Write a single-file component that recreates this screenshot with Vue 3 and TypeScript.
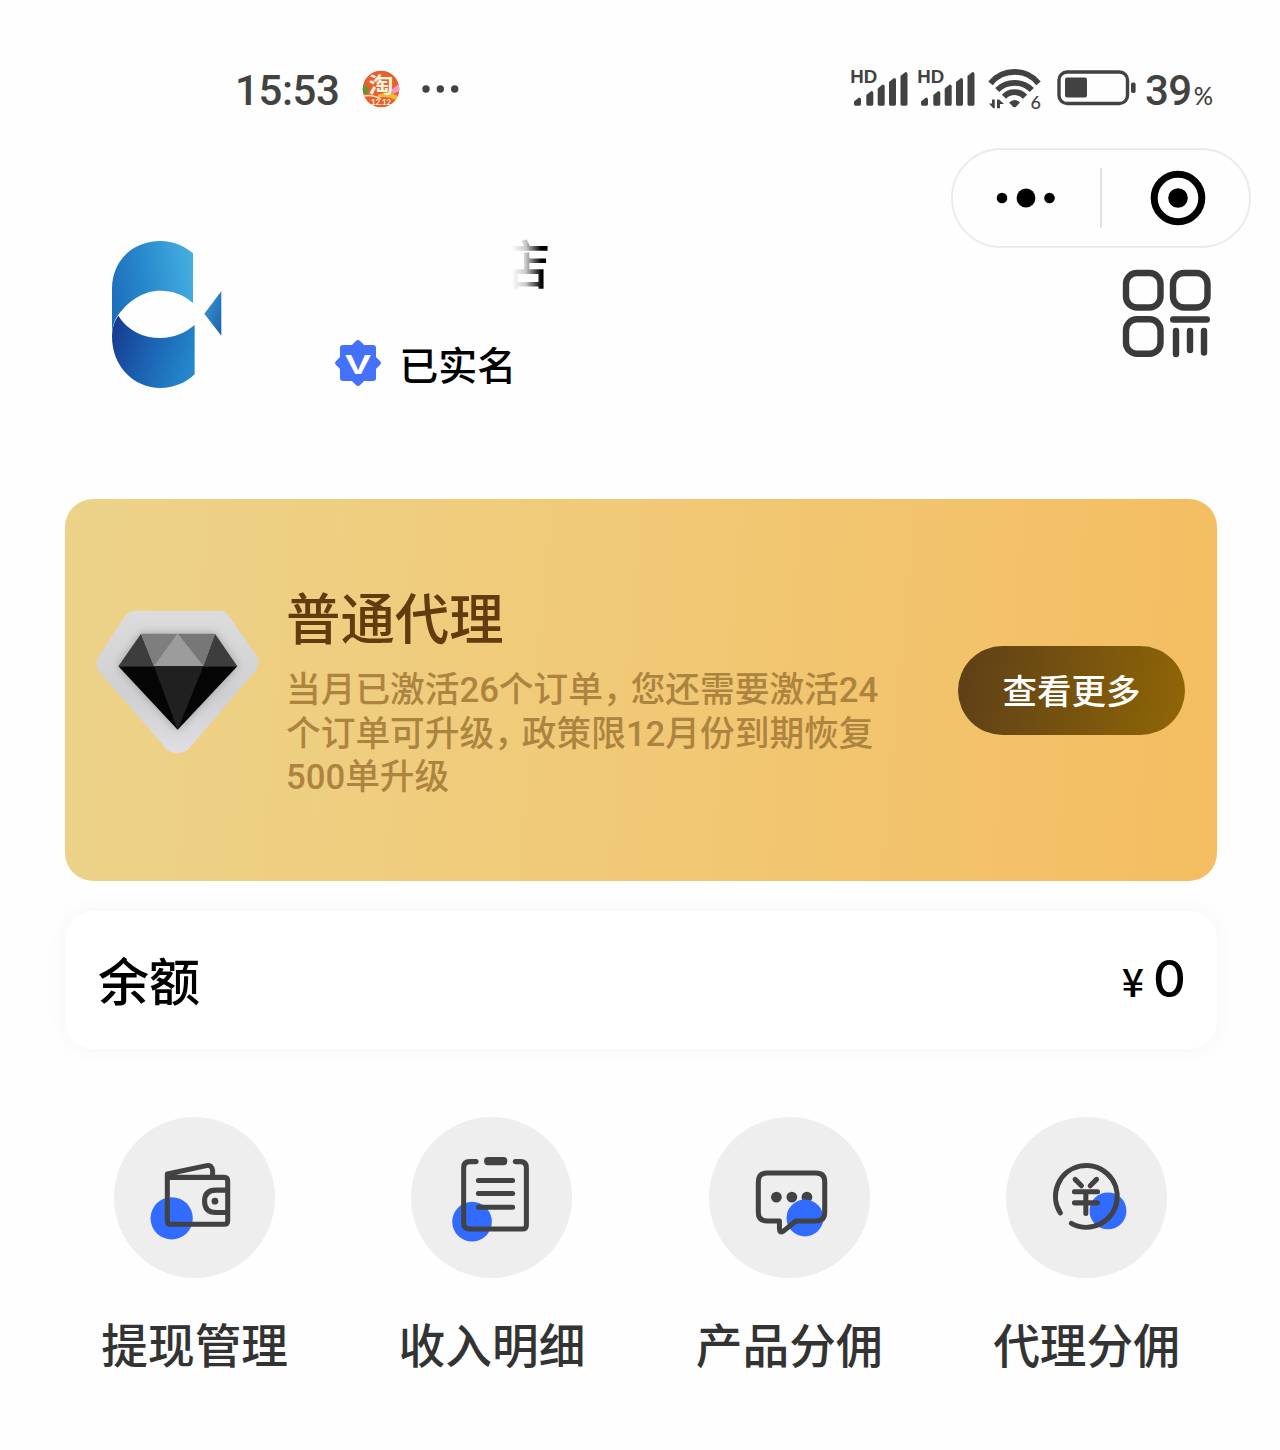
<script lang="ts" setup>
import { ref } from "vue"

interface MenuItem {
  key: string
  label: string
  viewBox: string
}

const time = ref("15:53")
const battery = ref(39)
const balance = ref(0)

// bars of one signal icon: left edge and top edge
const bars = [
  [3, 31.5],
  [15.3, 25],
  [26.7, 18.5],
  [38, 12],
  [49.5, 6],
]

const menus: MenuItem[] = [
  { key: "wallet", label: "提现管理", viewBox: "74 52 480 480" },
  { key: "detail", label: "收入明细", viewBox: "65 52 480 480" },
  { key: "product", label: "产品分佣", viewBox: "72 52 480 480" },
  { key: "agent", label: "代理分佣", viewBox: "80 52 480 480" },
]
</script>

<template>
  <div class="page">
    <div class="status">
      <span class="time">{{ time }}</span>
      <svg class="app-icon" viewBox="0 0 38 38">
        <defs>
          <clipPath id="app-clip"><circle cx="19" cy="19" r="18.3" /></clipPath>
        </defs>
        <g clip-path="url(#app-clip)">
          <rect width="38" height="38" fill="#e8602c" />
          <path d="M0 14L7 18L5 24L0 22Z" fill="#5c9a35" />
          <path d="M29 20L38 13V21L31 24Z" fill="#ef9ac4" />
          <path d="M16 25Q25 20 36 26L34 30Q24 25 15 28Z" fill="#f7b733" />
          <path d="M2 26Q10 24 19 29" stroke="#fbe3b0" stroke-width="1.5" fill="none" />
        </g>
        <text x="6.5" y="22" class="app-word" textLength="25" lengthAdjust="spacingAndGlyphs">淘</text>
        <text x="9" y="34.5" class="app-date" textLength="20" lengthAdjust="spacingAndGlyphs">12.12</text>
      </svg>
      <svg class="more" viewBox="0 0 38 8">
        <circle cx="4" cy="4" r="3.7" />
        <circle cx="18.3" cy="4" r="3.7" />
        <circle cx="32.7" cy="4" r="3.7" />
      </svg>
      <div class="status-right">
        <svg v-for="n in 2" :key="n" class="signal" viewBox="0 0 58 40">
          <text x="-0.8" y="17" class="hd" textLength="27" lengthAdjust="spacingAndGlyphs">HD</text>
          <path
            v-for="bar in bars"
            :key="bar[0]"
            :d="`M${bar[0]} ${bar[1] + 4}L${bar[0] + 5} ${bar[1]}Q${bar[0] + 7} ${bar[1]} ${bar[0] + 7} ${bar[1] + 2}V38Q${bar[0] + 7} 39.7 ${bar[0] + 5.5} 39.7H${bar[0] + 1.5}Q${bar[0]} 39.7 ${bar[0]} 38Z`"
          />
        </svg>
        <svg class="wifi" viewBox="0 0 54 44">
          <g fill="none" stroke="#424242" stroke-width="5.8">
            <path d="M2.5 15.3A31 31 0 0 1 50.5 15.3" />
            <path d="M9.2 22A24.6 24.6 0 0 1 43.8 22" />
            <path d="M16 28.7A14.5 14.5 0 0 1 37 28.7" />
          </g>
          <path d="M21 34.5Q26.5 29.5 32 34.5L28 38.7Q26.5 40 25 38.7Z" />
          <path d="M1 35.5H4V31.5H6.8V40.2H5.2ZM9 40.2V31.5H11L16 36H12V40.2Z" />
          <text x="42.5" y="41" class="wifi-num">6</text>
        </svg>
        <svg class="battery" viewBox="0 0 80 36">
          <rect x="2" y="2" width="68.5" height="31.5" rx="8" fill="none" stroke="#424242" stroke-width="3.4" />
          <rect x="8" y="7.5" width="22" height="20" rx="2" />
          <rect x="74" y="12.5" width="4.6" height="10.5" rx="1.8" />
        </svg>
        <span class="percent">{{ battery }}<small>%</small></span>
      </div>
    </div>

    <div class="header">
      <svg class="logo" viewBox="60 55 340 455">
        <defs>
          <linearGradient id="fish-top" x1="0" y1="0.6" x2="1" y2="0.4">
            <stop offset="0" stop-color="#1c6fbb" />
            <stop offset="0.4" stop-color="#2787cc" />
            <stop offset="1" stop-color="#42addf" />
          </linearGradient>
          <linearGradient id="fish-bottom" x1="0" y1="0.3" x2="1" y2="0.6">
            <stop offset="0" stop-color="#173d91" />
            <stop offset="0.45" stop-color="#1b62b2" />
            <stop offset="1" stop-color="#2588cc" />
          </linearGradient>
          <linearGradient id="fish-tail" x1="0" y1="0" x2="1" y2="1">
            <stop offset="0" stop-color="#3c9dd8" />
            <stop offset="1" stop-color="#1b5fa8" />
          </linearGradient>
        </defs>
        <path
          d="M66 205C68 118 132 64 212 64C250 64 285 80 309 101V250C280 224 246 213 212 213C158 213 115 245 85 285C73 300 68 320 66 345Z"
          fill="url(#fish-top)"
        />
        <path
          d="M85 288C112 332 160 355 212 355C250 355 285 340 314 316V464C288 490 250 505 212 505C130 505 66 440 66 350C67 325 73 303 85 288Z"
          fill="url(#fish-bottom)"
        />
        <path d="M343 282L394 215V348Z" fill="url(#fish-tail)" />
      </svg>
      <div class="user">
        <div class="name">店</div>
        <div class="verified">
          <svg class="badge" viewBox="0 0 48 48">
            <g fill="#4470fa">
              <rect x="6" y="6" width="36" height="36" rx="3" />
              <rect x="7" y="7" width="34" height="34" rx="3" transform="rotate(45 24 24)" />
            </g>
            <text x="11" y="34.5" textLength="26" lengthAdjust="spacingAndGlyphs">V</text>
          </svg>
          <span>已实名</span>
        </div>
      </div>
      <div class="tools">
        <div class="capsule">
          <svg class="capsule-more" viewBox="0 0 60 20">
            <circle cx="6" cy="10" r="5.3" />
            <circle cx="30" cy="10" r="9.4" />
            <circle cx="53.5" cy="10" r="5.3" />
          </svg>
          <i class="divider" />
          <svg class="capsule-close" viewBox="0 0 56 56">
            <circle cx="28" cy="28" r="23.8" fill="none" stroke="#000" stroke-width="7" />
            <circle cx="28" cy="28" r="9.8" />
          </svg>
        </div>
        <svg class="qr" viewBox="0 0 90 90">
          <rect x="4" y="4" width="34.5" height="34.5" rx="11" />
          <rect x="51" y="4" width="34.5" height="34.5" rx="11" />
          <rect x="4" y="50.3" width="34.5" height="34.5" rx="11" />
          <path d="M51.2 50.5H84.8M54 62V85M68 62V81M82 62V83.5" />
        </svg>
      </div>
    </div>

    <div class="level">
      <svg class="diamond" viewBox="45 88 495 436">
        <defs>
          <linearGradient id="gem-edge" x1="0" y1="0" x2="0" y2="1">
            <stop offset="0" stop-color="#dcdcdc" />
            <stop offset="0.6" stop-color="#d0d0d3" />
            <stop offset="1" stop-color="#dfdee2" />
          </linearGradient>
          <filter id="gem-soft" x="-20%" y="-20%" width="140%" height="140%">
            <feGaussianBlur stdDeviation="14" />
          </filter>
        </defs>
        <path
          d="M165 93H420Q437 94 447 109L532 232Q540 252 528 272L325 509Q315 519 300 519H285Q270 519 259 507L58 276Q44 258 53 235L135 109Q147 94 165 93Z"
          fill="url(#gem-edge)"
        />
        <path d="M183 162H405L472 260L293 450L115 260Z" fill="#a0a0a4" filter="url(#gem-soft)" />
        <path d="M183 162L115 260H222Z" fill="#3d3d3d" />
        <path d="M405 162L472 260H370Z" fill="#3d3d3d" />
        <path d="M183 162H293L222 260Z" fill="#7e7e7e" />
        <path d="M405 162H293L370 260Z" fill="#777" />
        <path d="M293 162L222 260H370Z" fill="#9c9c9c" />
        <path d="M115 260H472L293 450Z" fill="#050505" />
        <path d="M222 260H370L293 450Z" fill="#202020" />
      </svg>
      <div class="level-info">
        <div class="level-name">普通代理</div>
        <div class="level-desc">
          <div>当月已激活26个订单<span class="comma">，</span>您还需要激活24</div>
          <div>个订单可升级<span class="comma">，</span>政策限12月份到期恢复</div>
          <div>500单升级</div>
        </div>
      </div>
      <button class="level-more">查看更多</button>
    </div>

    <div class="balance">
      <span class="balance-label">余额</span>
      <span class="balance-value"><small>¥</small>{{ balance }}</span>
    </div>

    <div class="menu">
      <div v-for="item in menus" :key="item.key" class="menu-item">
        <svg class="menu-icon" :viewBox="item.viewBox">
          <template v-if="item.key === 'wallet'">
            <circle class="dot" cx="246" cy="354" r="63" />
            <path class="line" d="M233 232H402Q413 232 413 243V361Q413 372 402 372H244Q233 372 233 361V222L350 197Q366 194 368 212V230" />
            <path class="line" d="M412 270H378Q344 270 344 303T378 337H412" />
            <circle class="ink" cx="375" cy="303" r="10" />
          </template>
          <template v-else-if="item.key === 'detail'">
            <circle class="dot" cx="247" cy="364" r="59" />
            <path class="line" d="M259 185H240Q222 185 222 203V369Q222 386 240 386H397Q409 386 409 374V203Q409 185 391 185H376" />
            <rect class="ink" x="283" y="171" width="69" height="25" rx="11" />
            <path class="line" d="M266 241H368M266 280H368M266 321H368" />
          </template>
          <template v-else-if="item.key === 'product'">
            <circle class="ink" cx="273" cy="291" r="16" />
            <circle class="ink" cx="319" cy="291" r="16" />
            <circle class="ink" cx="364" cy="291" r="16" />
            <circle class="dot" cx="358" cy="353" r="55" />
            <path class="line" d="M245 219H391Q417 219 417 245V336Q417 362 391 362H331L293 393Q282 399 282 385V362H245Q219 362 219 336V245Q219 219 245 219Z" />
          </template>
          <template v-else>
            <circle class="dot" cx="384" cy="332" r="55" />
            <path class="line" d="M242 338A92 92 0 1 1 275 369" />
            <path class="line" d="M286 238L305 257M350 238L331 257M284 275H353M284 308H353M318 276V340" />
          </template>
        </svg>
        <span class="menu-label">{{ item.label }}</span>
      </div>
    </div>
  </div>
</template>

<style>
body {
  margin: 0;
  background: #fefefe;
}
</style>

<style scoped>
* {
  box-sizing: border-box;
}

.page {
  width: 1280px;
  height: 1450px;
  overflow: hidden;
  background: #fefefe;
  color: #000;
  font-family: "Noto Sans CJK SC", sans-serif;
  font-weight: 500;
}

svg {
  display: block;
  flex: none;
}

.status {
  display: flex;
  align-items: flex-start;
  height: 148px;
  padding: 30px 66px 0 235px;
  color: #424242;
  fill: #424242;
}

.time {
  width: 105px;
  margin-top: 36px;
  font-family: Roboto, sans-serif;
  font-size: 42px;
  line-height: 50px;
  letter-spacing: -0.4px;
  white-space: nowrap;
}

.app-icon {
  width: 38px;
  height: 38px;
  margin: 40px 0 0 22px;
  overflow: visible;
}

.app-word {
  font: 700 21px "Noto Sans CJK SC", sans-serif;
  fill: #fff6e0;
}

.app-date {
  font: 700 8px Lato, sans-serif;
  fill: #fff6e0;
}

.more {
  width: 38px;
  height: 8px;
  margin: 55px 0 0 22px;
}

.status-right {
  display: flex;
  margin-left: auto;
}

.signal {
  width: 58px;
  height: 40px;
  margin: 36px 9.7px 0 0;
}

.hd {
  font: 700 18px "Liberation Sans", sans-serif;
}

.wifi {
  width: 54px;
  height: 44px;
  margin: 38px 15px 0 2px;
}

.wifi-num {
  font: 500 18px Lato, sans-serif;
}

.battery {
  width: 80px;
  height: 36px;
  margin: 40px 8px 0 0;
}

.percent {
  width: 69px;
  margin-top: 36px;
  font-family: Roboto, sans-serif;
  font-size: 42px;
  line-height: 50px;
  letter-spacing: -0.5px;
  white-space: nowrap;
}

.percent small {
  margin-left: 2px;
  font-family: Lato, sans-serif;
  font-size: 24px;
}

.header {
  display: flex;
  height: 351px;
  padding: 0 29px 0 110px;
}

.logo {
  width: 113.3px;
  height: 151.7px;
  margin-top: 90px;
}

.user {
  margin: 83px 0 0 111px;
}

.name {
  margin-left: 163px;
  font-size: 53px;
  line-height: 62px;
  color: transparent;
  background: linear-gradient(to right, transparent 28%, #0003 54%, #000 84%);
  -webkit-background-clip: text;
  background-clip: text;
}

.verified {
  display: flex;
  align-items: center;
  gap: 17px;
  height: 50px;
  margin-top: 45px;
  font-size: 39px;
}

.badge {
  width: 48px;
  height: 48px;
}

.badge text {
  font: 700 28px "Liberation Sans", sans-serif;
  fill: #fff;
}

.tools {
  display: flex;
  flex-direction: column;
  align-items: flex-end;
  margin-left: auto;
}

.capsule {
  display: flex;
  align-items: center;
  width: 300px;
  height: 100px;
  padding-left: 43px;
  border: 2px solid #ebebeb;
  border-radius: 50px;
}

.capsule-more {
  width: 60px;
  height: 20px;
}

.divider {
  width: 2px;
  height: 60px;
  margin: 0 48px 0 44px;
  background: #e3e3e3;
}

.capsule-close {
  width: 56px;
  height: 56px;
}

.qr {
  width: 90px;
  height: 90px;
  margin: 21px 39px 0 0;
  fill: none;
  stroke: #3a3a3a;
  stroke-width: 6.4;
  stroke-linecap: round;
}

.level {
  display: flex;
  width: 1152px;
  height: 382px;
  margin-left: 65px;
  padding: 0 32px 0 30px;
  border-radius: 28px;
  background: linear-gradient(95deg, #ecd38a, #f1c976 50%, #f4bd61);
}

.diamond {
  width: 165px;
  height: 145.3px;
  margin-top: 110px;
}

.level-info {
  margin: 82px 0 0 26px;
}

.level-name {
  font-size: 54.4px;
  line-height: 70px;
  color: #603c0f;
}

.level-desc {
  margin-top: 18px;
  font-family: Roboto, "Noto Sans CJK SC", sans-serif;
  font-size: 34.7px;
  line-height: 43.5px;
  color: #ad843f;
  white-space: nowrap;
}

.level-desc > div {
  height: 43.5px;
}

.comma {
  letter-spacing: -7px;
}

.level-more {
  width: 227px;
  height: 89px;
  margin: 147px 0 0 auto;
  padding: 0 0 3px;
  border: 0;
  border-radius: 45px;
  background: linear-gradient(100deg, #5d3f18, #906606);
  color: #fff;
  font: inherit;
  font-size: 34.5px;
}

.balance {
  display: flex;
  align-items: center;
  justify-content: space-between;
  width: 1152px;
  height: 138px;
  margin: 30px 0 0 65px;
  padding: 0 31px 2px 33px;
  border-radius: 28px;
  background: #fff;
  box-shadow: 0 0 22px rgba(0, 0, 0, 0.04);
}

.balance-label {
  font-size: 51px;
}

.balance-value {
  padding-bottom: 2px;
  font-family: Inter, sans-serif;
  font-size: 51px;
}

.balance-value small {
  margin-right: 9px;
  font-family: "Noto Sans CJK SC", sans-serif;
  font-size: 39px;
}

.menu {
  display: grid;
  grid-template-columns: repeat(4, 297.3px);
  margin: 68px 0 0 46px;
}

.menu-item {
  display: flex;
  flex-direction: column;
  align-items: center;
}

.menu-icon {
  width: 161px;
  height: 161px;
  border-radius: 50%;
  background: #eee;
}

.dot {
  fill: #316bff;
}

.ink {
  fill: #424242;
}

.line {
  fill: none;
  stroke: #424242;
  stroke-width: 15;
  stroke-linecap: round;
  stroke-linejoin: round;
}

.menu-label {
  margin-top: 30px;
  font-size: 46.7px;
  line-height: 70px;
  color: #333;
}
</style>
